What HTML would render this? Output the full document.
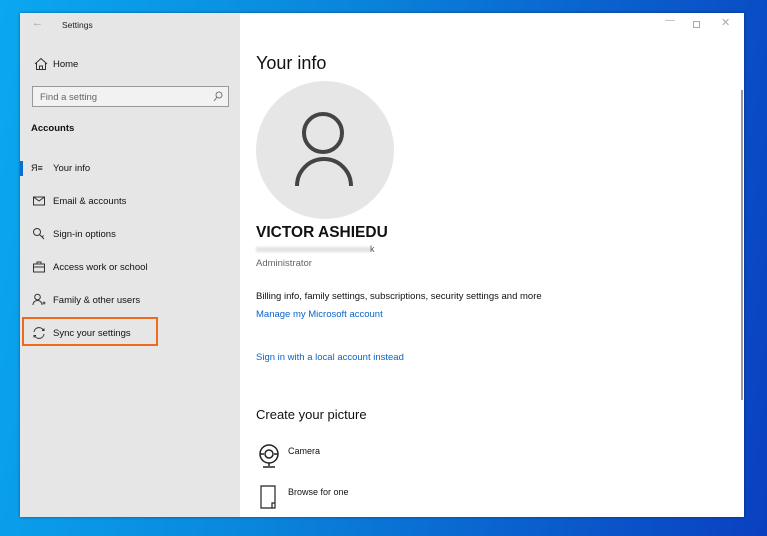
<!DOCTYPE html>
<html><head><style>
*{margin:0;padding:0;box-sizing:border-box}
body{width:767px;height:536px;overflow:hidden;position:relative;font-family:"Liberation Sans",sans-serif;background:linear-gradient(100deg,#0aa8f0 0%,#0a86dc 40%,#0a5ccc 75%,#0a40c0 100%);}
.win{position:absolute;left:20px;top:13px;width:724px;height:504px;background:#fff;box-shadow:0 0 3px rgba(0,0,0,.4)}
.side{position:absolute;left:0;top:0;width:220px;height:504px;background:#e6e6e6}
.t{position:absolute;white-space:nowrap;font-size:9.5px;color:#111}
.nav{position:absolute;left:12px;width:18px;height:14px}
</style></head><body>
<div class="win">
<div class="side">
 <div class="t" style="left:12px;top:4px;color:#999;font-size:11px">&#8592;</div>
 <div class="t" style="left:42px;top:7px;font-size:8.5px;color:#222">Settings</div>
 <svg class="nav" style="top:44px" viewBox="0 0 18 14"><path d="M3 7 L9 1.5 L15 7 M4.5 5.8 V12.5 H13.5 V5.8 M7.5 12.5 V9 H10.5 V12.5" fill="none" stroke="#333" stroke-width="1"/></svg>
 <div class="t" style="left:33px;top:46px">Home</div>
 <div style="position:absolute;left:12px;top:73px;width:197px;height:21px;border:1px solid #999;background:#f2f2f2"></div>
 <div class="t" style="left:20px;top:79px;color:#666">Find a setting</div>
 <svg style="position:absolute;left:193px;top:78px" width="10" height="11" viewBox="0 0 10 11"><circle cx="6" cy="4" r="3" fill="none" stroke="#777"/><path d="M4 6 L1 10" stroke="#777"/></svg>
 <div class="t" style="left:11px;top:110px;font-weight:bold;font-size:9.5px">Accounts</div>
 <div style="position:absolute;left:0;top:148px;width:3px;height:15px;background:#0a6fd0"></div>
 <div class="t" style="left:11px;top:150px;font-size:9px">&#1071;&#8801;</div><div class="t" style="left:33px;top:150px">Your info</div>
 <svg class="nav" style="top:181px" viewBox="0 0 18 14"><rect x="1.5" y="3" width="11" height="8" fill="none" stroke="#333"/><path d="M1.5 3 L7 7 L12.5 3" fill="none" stroke="#333"/></svg>
 <div class="t" style="left:33px;top:183px">Email &amp; accounts</div>
 <svg class="nav" style="top:214px" viewBox="0 0 18 14"><circle cx="5" cy="5" r="3.5" fill="none" stroke="#333"/><path d="M7.5 7.5 L12 12 M10 10 L11.5 8.5" stroke="#333" fill="none"/></svg>
 <div class="t" style="left:33px;top:216px">Sign-in options</div>
 <svg class="nav" style="top:247px" viewBox="0 0 18 14"><rect x="1.5" y="4" width="11" height="8" fill="none" stroke="#333"/><path d="M5 4 V2 H9 V4 M1.5 7 H12.5" fill="none" stroke="#333"/></svg>
 <div class="t" style="left:33px;top:249px">Access work or school</div>
 <svg class="nav" style="top:280px" viewBox="0 0 18 14"><circle cx="5.5" cy="4" r="2.8" fill="none" stroke="#333"/><path d="M1 12 C1 6 10 6 10 12 M10.5 10 H13.5 M12 8.5 V11.5" fill="none" stroke="#333"/></svg>
 <div class="t" style="left:33px;top:282px">Family &amp; other users</div>
 <div style="position:absolute;left:2px;top:304px;width:136px;height:29px;border:2px solid #f06a1e"></div>
 <svg class="nav" style="top:313px" viewBox="0 0 18 14"><path d="M2 6 A5 5 0 0 1 11.5 4.5 M12 8 A5 5 0 0 1 2.5 9.5 M10 4.5 H12 V2.5 M4 9.5 H2 V11.5" fill="none" stroke="#333"/></svg>
 <div class="t" style="left:33px;top:315px">Sync your settings</div>
</div>
<div class="t" style="left:645px;top:2px;color:#aaa;font-size:10px">&#8212;</div>
<div style="position:absolute;left:673px;top:8px;width:7px;height:7px;border:1px solid #aaa"></div>
<div class="t" style="left:701px;top:3px;color:#aaa;font-size:11px">&#10005;</div>
<div style="position:absolute;left:721px;top:77px;width:2px;height:310px;background:#999"></div>
<div class="t" style="left:236px;top:40px;font-size:18px;color:#111">Your info</div>
<svg style="position:absolute;left:236px;top:68px" width="140" height="140" viewBox="0 0 140 140"><circle cx="69" cy="69" r="69" fill="#e6e6e6"/><circle cx="67" cy="52" r="19" fill="none" stroke="#444" stroke-width="4"/><path d="M41 105 A27 27 0 0 1 95 105" fill="none" stroke="#444" stroke-width="4"/></svg>
<div class="t" style="left:236px;top:211px;font-size:15.5px;font-weight:bold">VICTOR ASHIEDU</div>
<div style="position:absolute;left:236px;top:234px;width:115px;height:5px;background:#e2e2e2;filter:blur(1px)"></div>
<div class="t" style="left:350px;top:231px;font-size:9px;color:#555">k</div>
<div class="t" style="left:236px;top:245px;font-size:9.5px;color:#666">Administrator</div>
<div class="t" style="left:236px;top:278px">Billing info, family settings, subscriptions, security settings and more</div>
<div class="t" style="left:236px;top:296px;color:#0a64c8">Manage my Microsoft account</div>
<div class="t" style="left:236px;top:339px;color:#0a64c8">Sign in with a local account instead</div>
<div class="t" style="left:236px;top:394px;font-size:13px">Create your picture</div>
<svg style="position:absolute;left:238px;top:430px" width="22" height="26" viewBox="0 0 22 26"><circle cx="11" cy="11" r="9" fill="none" stroke="#222" stroke-width="1.5"/><circle cx="11" cy="11" r="4" fill="none" stroke="#222" stroke-width="1.5"/><path d="M2 11 H6 M16 11 H20 M11 20 V23 M5 24 H17" stroke="#222" stroke-width="1.5"/></svg>
<div class="t" style="left:268px;top:433px;font-size:9px">Camera</div>
<svg style="position:absolute;left:240px;top:472px" width="18" height="24" viewBox="0 0 18 24"><path d="M1 1 H15 V23 H1 Z M12 23 V18 H15" fill="none" stroke="#222" stroke-width="1.2"/></svg>
<div class="t" style="left:268px;top:474px;font-size:9px">Browse for one</div>
</div>
</body></html>
